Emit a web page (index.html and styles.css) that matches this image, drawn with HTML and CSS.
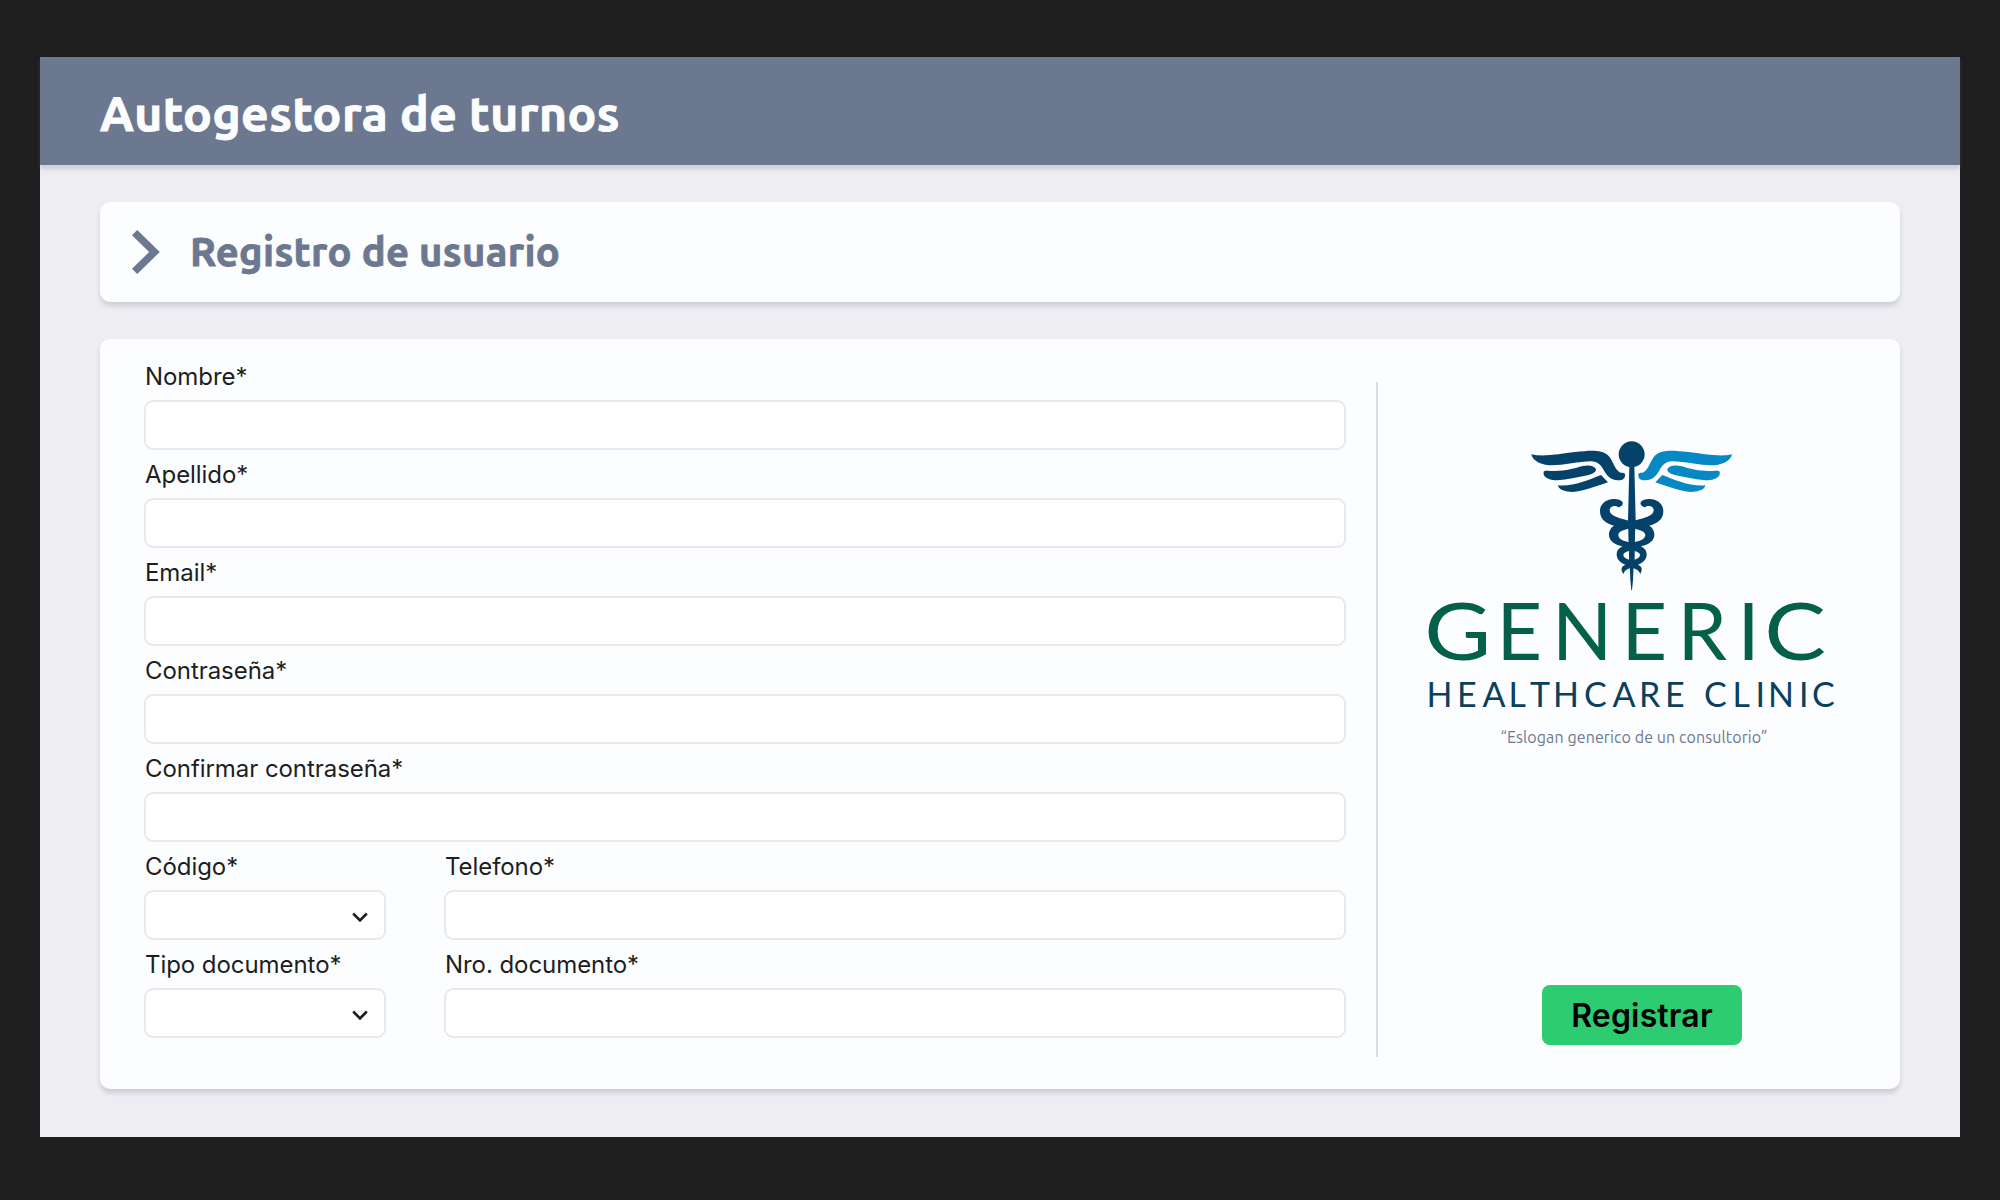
FILE: index.html
```html
<!DOCTYPE html>
<html lang="es">
<head>
<meta charset="utf-8">
<title>Autogestora de turnos</title>
<link rel="stylesheet" href="styles.css">
</head>
<body>
<div class="screen">
  <header class="topbar"><h1 class="topbar-title">Autogestora de turnos</h1></header>
  <main class="content">
    <section class="card heading">
      <svg class="heading-icon" width="28" height="44" viewBox="0 0 28 44"><path d="M2.6 2.6 L22.5 22 L2.6 41.4" fill="none" stroke="#6c788f" stroke-width="7.4"/></svg>
      <h2 class="heading-title">Registro de usuario</h2>
    </section>
    <section class="card panel">
      <form class="form">
        <label class="field wide"><span class="label">Nombre*</span><input class="control" type="text"></label>
        <label class="field wide"><span class="label">Apellido*</span><input class="control" type="text"></label>
        <label class="field wide"><span class="label">Email*</span><input class="control" type="email"></label>
        <label class="field wide"><span class="label">Contraseña*</span><input class="control" type="password"></label>
        <label class="field wide"><span class="label">Confirmar contraseña*</span><input class="control" type="password"></label>
        <div class="field"><span class="label">Código*</span><div class="control select"><svg width="16" height="11" viewBox="0 0 16 11"><path d="M1.2 1.5 L8 8.5 L14.8 1.5" fill="none" stroke="#1e1e1e" stroke-width="2.6"/></svg></div></div>
        <label class="field"><span class="label">Telefono*</span><input class="control" type="text"></label>
        <div class="field"><span class="label">Tipo documento*</span><div class="control select"><svg width="16" height="11" viewBox="0 0 16 11"><path d="M1.2 1.5 L8 8.5 L14.8 1.5" fill="none" stroke="#1e1e1e" stroke-width="2.6"/></svg></div></div>
        <label class="field"><span class="label">Nro. documento*</span><input class="control" type="text"></label>
      </form>
      <aside class="side">
        <svg class="logo" width="430" height="290" viewBox="1419 430 430 290">
          <g transform="translate(1500 420) scale(.33333)">
            <g fill="#04426a">
              <circle cx="395" cy="103" r="39"/>
              <path d="M388 138 H403 L407 300 L399 480 L396 511 H394 L391 480 L384 300Z"/>
              <path d="M94 103 C130 112 180 101 225 96 C270 91 304 88 323 105 C340 121 342 145 358 156 C364 160 369 157 375 161 C377 176 367 182 354 181 C330 180 319 164 311 150 C303 136 295 125 273 124 C235 124 190 137 147 136 C115 133 97 119 94 103Z"/>
              <path d="M143 152 C190 156 220 146 248 138 C264 134 284 136 288 148 C288 158 276 163 263 166 C228 172 194 183 160 180 C141 177 128 169 131 155 C134 151 138 152 143 152Z M174 196 C220 200 262 181 303 165 L324 187 C285 200 248 214 218 216 C197 216 176 210 174 196Z"/>
            </g>
            <g fill="#0588c4" transform="translate(790 0) scale(-1 1)">
              <path d="M94 103 C130 112 180 101 225 96 C270 91 304 88 323 105 C340 121 342 145 358 156 C364 160 369 157 375 161 C377 176 367 182 354 181 C330 180 319 164 311 150 C303 136 295 125 273 124 C235 124 190 137 147 136 C115 133 97 119 94 103Z"/>
              <path d="M143 152 C190 156 220 146 248 138 C264 134 284 136 288 148 C288 158 276 163 263 166 C228 172 194 183 160 180 C141 177 128 169 131 155 C134 151 138 152 143 152Z M174 196 C220 200 262 181 303 165 L324 187 C285 200 248 214 218 216 C197 216 176 210 174 196Z"/>
            </g>
            <g fill="#04426a" fill-rule="evenodd">
              <path d="M394 305 C370 295 329 292 329 270 C330 255 350 256 354 262 C366 261 370 253 368 247 C362 237 345 236 334 238 C311 242 300 257 300 273 C300 298 317 310 342 317 C330 325 327 335 327 344 C327 360 340 373 367 379 C355 385 350 394 350 403 C350 417 358 427 376 434 C362 440 362 450 370 462 C374 450 383 446 395 443 C407 446 417 450 421 462 C427 450 428 440 414 434 C432 427 440 417 440 403 C440 394 435 385 423 379 C450 373 463 360 463 344 C463 335 460 325 448 317 C473 310 490 298 490 273 C490 257 479 242 456 238 C445 236 428 237 422 247 C420 253 424 261 436 262 C440 256 460 255 461 270 C461 292 420 295 394 305Z M386 326 C367 330 355 336 355 345 C355 355 367 363 386 366Z M404 326 C423 330 436 336 436 345 C436 355 423 363 404 366Z M387 393 C376 395 370 400 370 405 C370 411 377 416 387 419Z M404 393 C414 395 420 400 420 405 C420 411 413 416 404 419Z"/>
            </g>
          </g>
          <g class="logo-name">
            <text transform="translate(1424.3 660.3) scale(1.16 1)">G</text>
            <text y="660.3" x="1496.5 1552 1621.5 1677.5 1737.5">ENERI</text>
            <text transform="translate(1764.3 660.3) scale(1.17 1)">C</text>
          </g>
          <text class="logo-sub" y="707" x="1426.5 1457 1482.5 1508.5 1530 1553 1584 1612.5 1639 1665 1704 1732.5 1755.5 1768 1799 1812"
            >HEALTHCARECLINIC</text>
        </svg>
        <p class="slogan">“Eslogan generico de un consultorio”</p>
        <button class="submit" type="button">Registrar</button>
      </aside>
    </section>
  </main>
</div>
</body>
</html>
```
FILE: styles.css
```css
* { box-sizing: border-box; }
body {
  margin: 0;
  height: 1200px;
  padding: 57px 40px 63px;
  background: #1e1e1e;
  font-family: Inter, "Liberation Sans", sans-serif;
  color: #1e1e1e;
}
.screen { width: 1920px; height: 1080px; background: #eeedf2; }
.topbar {
  height: 108px;
  padding: 0 60px;
  display: flex;
  align-items: center;
  background: #6c788f;
  box-shadow: 0 4px 4px rgba(108, 120, 143, .25);
}
.topbar-title, .heading-title, .slogan {
  margin: 0;
  font-family: Ubuntu, "Noto Sans", sans-serif;
  white-space: nowrap;
}
.topbar-title {
  font-size: 48px;
  line-height: 60px;
  font-weight: 700;
  letter-spacing: .43px;
  -webkit-text-stroke: .9px currentColor;
  color: #fcfdff;
  padding-top: 4px;
}
.content { padding: 37px 60px 0; display: flex; flex-direction: column; gap: 37px; }
.card {
  background: #fcfdff;
  border-radius: 10px;
  box-shadow: 0 4px 4px rgba(108, 120, 143, .25);
}
.heading { height: 100px; display: flex; align-items: center; padding-left: 32px; gap: 30px; }
.heading-title {
  font-size: 40px;
  line-height: 50px;
  font-weight: 700;
  letter-spacing: .3px;
  -webkit-text-stroke: .8px currentColor;
  color: #6c788f;
}
.panel { height: 750px; display: flex; padding: 20px 0 32px 44px; }
.form {
  width: 1202px;
  display: grid;
  grid-template-columns: 242px 902px;
  column-gap: 58px;
  grid-auto-rows: 98px;
}
.field { display: flex; flex-direction: column; gap: 5px; }
.wide { grid-column: span 2; }
.label { font-size: 24px; line-height: 36px; letter-spacing: -.06px; padding-left: 1px; }
.control {
  width: 100%;
  height: 50px;
  border: 2px solid #e9e9eb;
  border-radius: 9px;
  background: #fff;
}
.select { display: flex; align-items: center; justify-content: flex-end; padding: 4px 16px 0 0; }
.side {
  flex: 1;
  margin: 23px 0 0 30px;
  border-left: 2px solid #d9dce5;
  display: flex;
  flex-direction: column;
  align-items: center;
  padding: 48px 10px 12px 0;
}
.logo { display: block; }
.logo-name, .logo-sub { font-family: Lato, sans-serif; }
.logo-name { font-size: 79px; fill: #056049; }
.logo-sub { font-size: 34px; fill: #0b3f5e; }
.slogan { font-size: 16px; line-height: 24px; letter-spacing: .1px; margin-top: 5px; color: #6c788f; }
.submit {
  width: 200px;
  height: 60px;
  margin: auto 0 0 16px;
  border: 0;
  border-radius: 8px;
  background: #2ecc71;
  color: #000;
  font: 600 32px/60px Inter, sans-serif;
  letter-spacing: .15px;
}
```
